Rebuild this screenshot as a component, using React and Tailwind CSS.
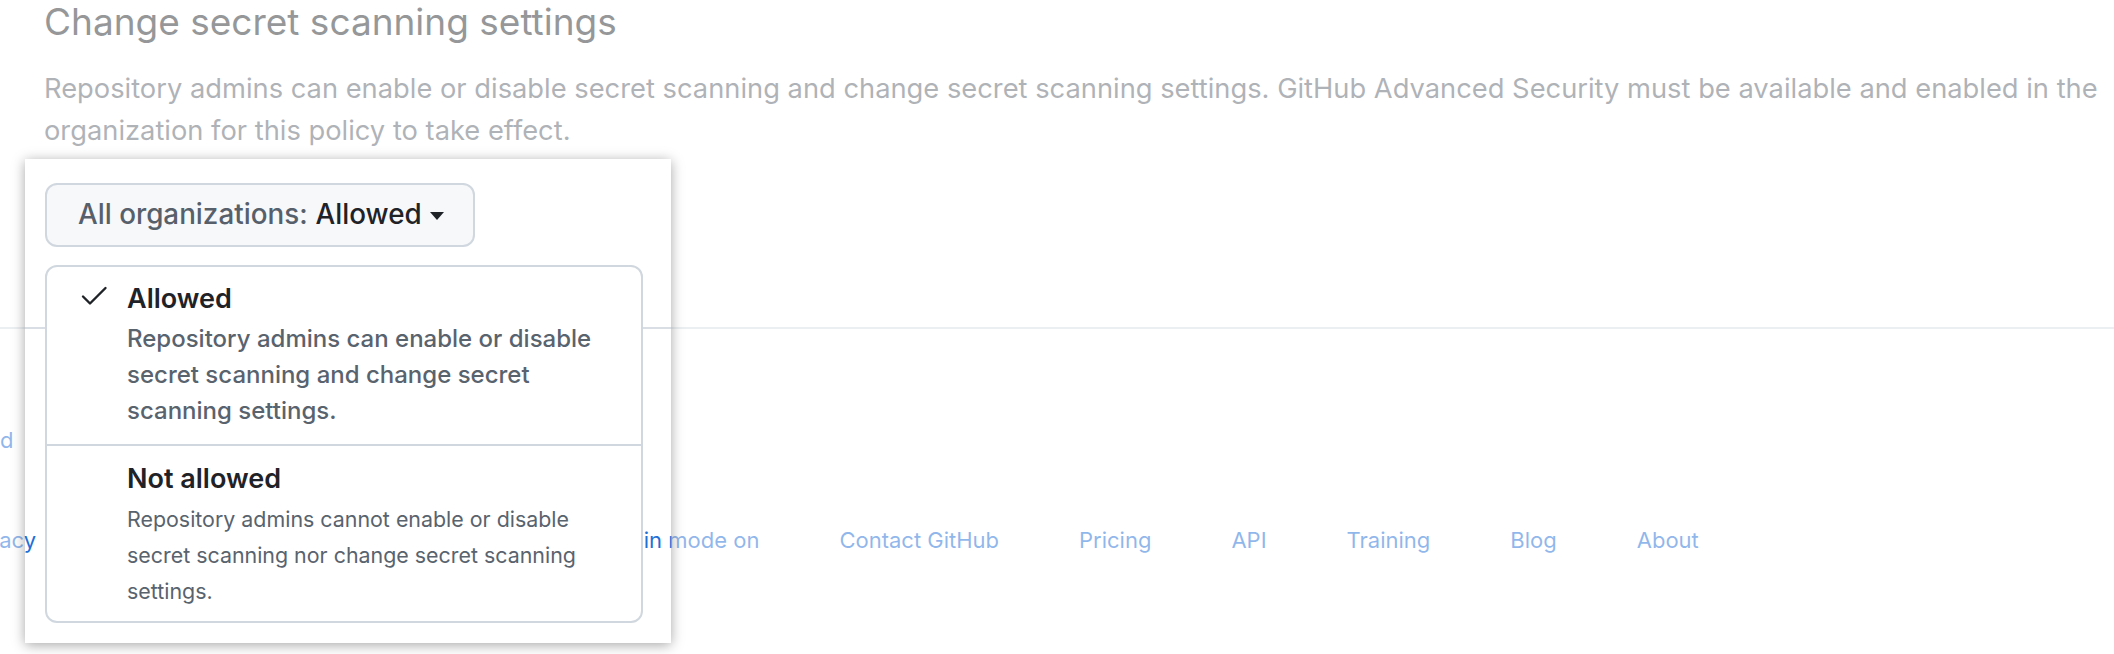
import React from 'react';

const footerRight = ['Plain mode on', 'Contact GitHub', 'Pricing', 'API', 'Training', 'Blog', 'About'];

function CheckIcon() {
  return (
    <svg viewBox="0 0 16 16" className="h-8 w-8" aria-hidden="true">
      <polyline
        points="2.5 8.75 6 12.25 13.75 4.5"
        fill="none"
        stroke="#1f2328"
        strokeWidth="1.2"
        strokeLinecap="round"
        strokeLinejoin="round"
      />
    </svg>
  );
}

function MenuItem({ checked, title, lines, descClass, padClass }) {
  return (
    <div className={`flex pl-[31px] pr-4 ${padClass}`}>
      <div className="h-8 w-8 shrink-0 -mt-[2px]">{checked && <CheckIcon />}</div>
      <div className="ml-[17px]">
        <div className="text-[27px] leading-[36px] font-semibold text-[#1f2328]">{title}</div>
        <div className={descClass}>
          {lines.map((line) => (
            <div key={line}>{line}</div>
          ))}
        </div>
      </div>
    </div>
  );
}

export default function App() {
  return (
    <div className="relative h-[654px] w-full overflow-hidden bg-white font-[Inter,sans-serif]">
      <div className="pl-[44px]">
        <h2 className="text-[37px] leading-[44px] font-normal text-[#2a2e33]">
          Change secret scanning settings
        </h2>
        <p className="mt-[24px] whitespace-nowrap text-[27.3px] leading-[42px] text-[#5f6770]">
          Repository admins can enable or disable secret scanning and change secret scanning settings. GitHub Advanced Security must be available and enabled in the
          <br />
          organization for this policy to take effect.
        </p>

        <div className="relative ml-px mt-[31px] w-fit">
          <button className="flex h-[64px] w-[430px] items-center rounded-[12px] border-2 border-[#d0d7de] bg-[#f6f8fa] pl-[31px] text-[27.8px] font-medium">
            <span className="text-[#57606a]">All organizations:</span>
            <span className="ml-[8px] text-[#1f2328]">Allowed</span>
            <span className="ml-[8px] mt-[2px] h-0 w-0 border-x-[7px] border-t-[8px] border-x-transparent border-t-[#1f2328]" />
          </button>

          <div className="absolute left-0 top-[82px] w-[598px] rounded-[12px] border-2 border-[#d0d7de] bg-white">
            <MenuItem
              checked
              title="Allowed"
              padClass="pt-[14px] pb-[15px]"
              descClass="mt-[4px] text-[24px] leading-[36px] font-medium text-[#59636e]"
              lines={[
                'Repository admins can enable or disable',
                'secret scanning and change secret',
                'scanning settings.',
              ]}
            />
            <div className="border-t-2 border-[#d0d7de]" />
            <MenuItem
              title="Not allowed"
              padClass="pt-[15px] pb-[12px]"
              descClass="mt-[4px] text-[21.4px] leading-[36px] text-[#59636e]"
              lines={[
                'Repository admins cannot enable or disable',
                'secret scanning nor change secret scanning',
                'settings.',
              ]}
            />
          </div>
        </div>
      </div>

      <div className="mt-[80px] border-t-2 border-[#d8dee4]" />

      <div className="mt-[96px] text-[22px] leading-[30px] text-[#1f6fd6]">
        <div>d</div>
        <div className="mt-[70px] flex">
          <div className="-ml-[41px] w-[653px] shrink-0">
            <span className="whitespace-nowrap">Privacy</span>
          </div>
          <div className="flex gap-[80px]">
            {footerRight.map((item) => (
              <span key={item} className="whitespace-nowrap">{item}</span>
            ))}
          </div>
        </div>
      </div>

      <div className="pointer-events-none absolute left-[25px] top-[159px] h-[484px] w-[646px] shadow-[0_2px_12px_rgba(0,0,0,0.35),0_0_0_3000px_rgba(255,255,255,0.5)]" />
    </div>
  );
}
